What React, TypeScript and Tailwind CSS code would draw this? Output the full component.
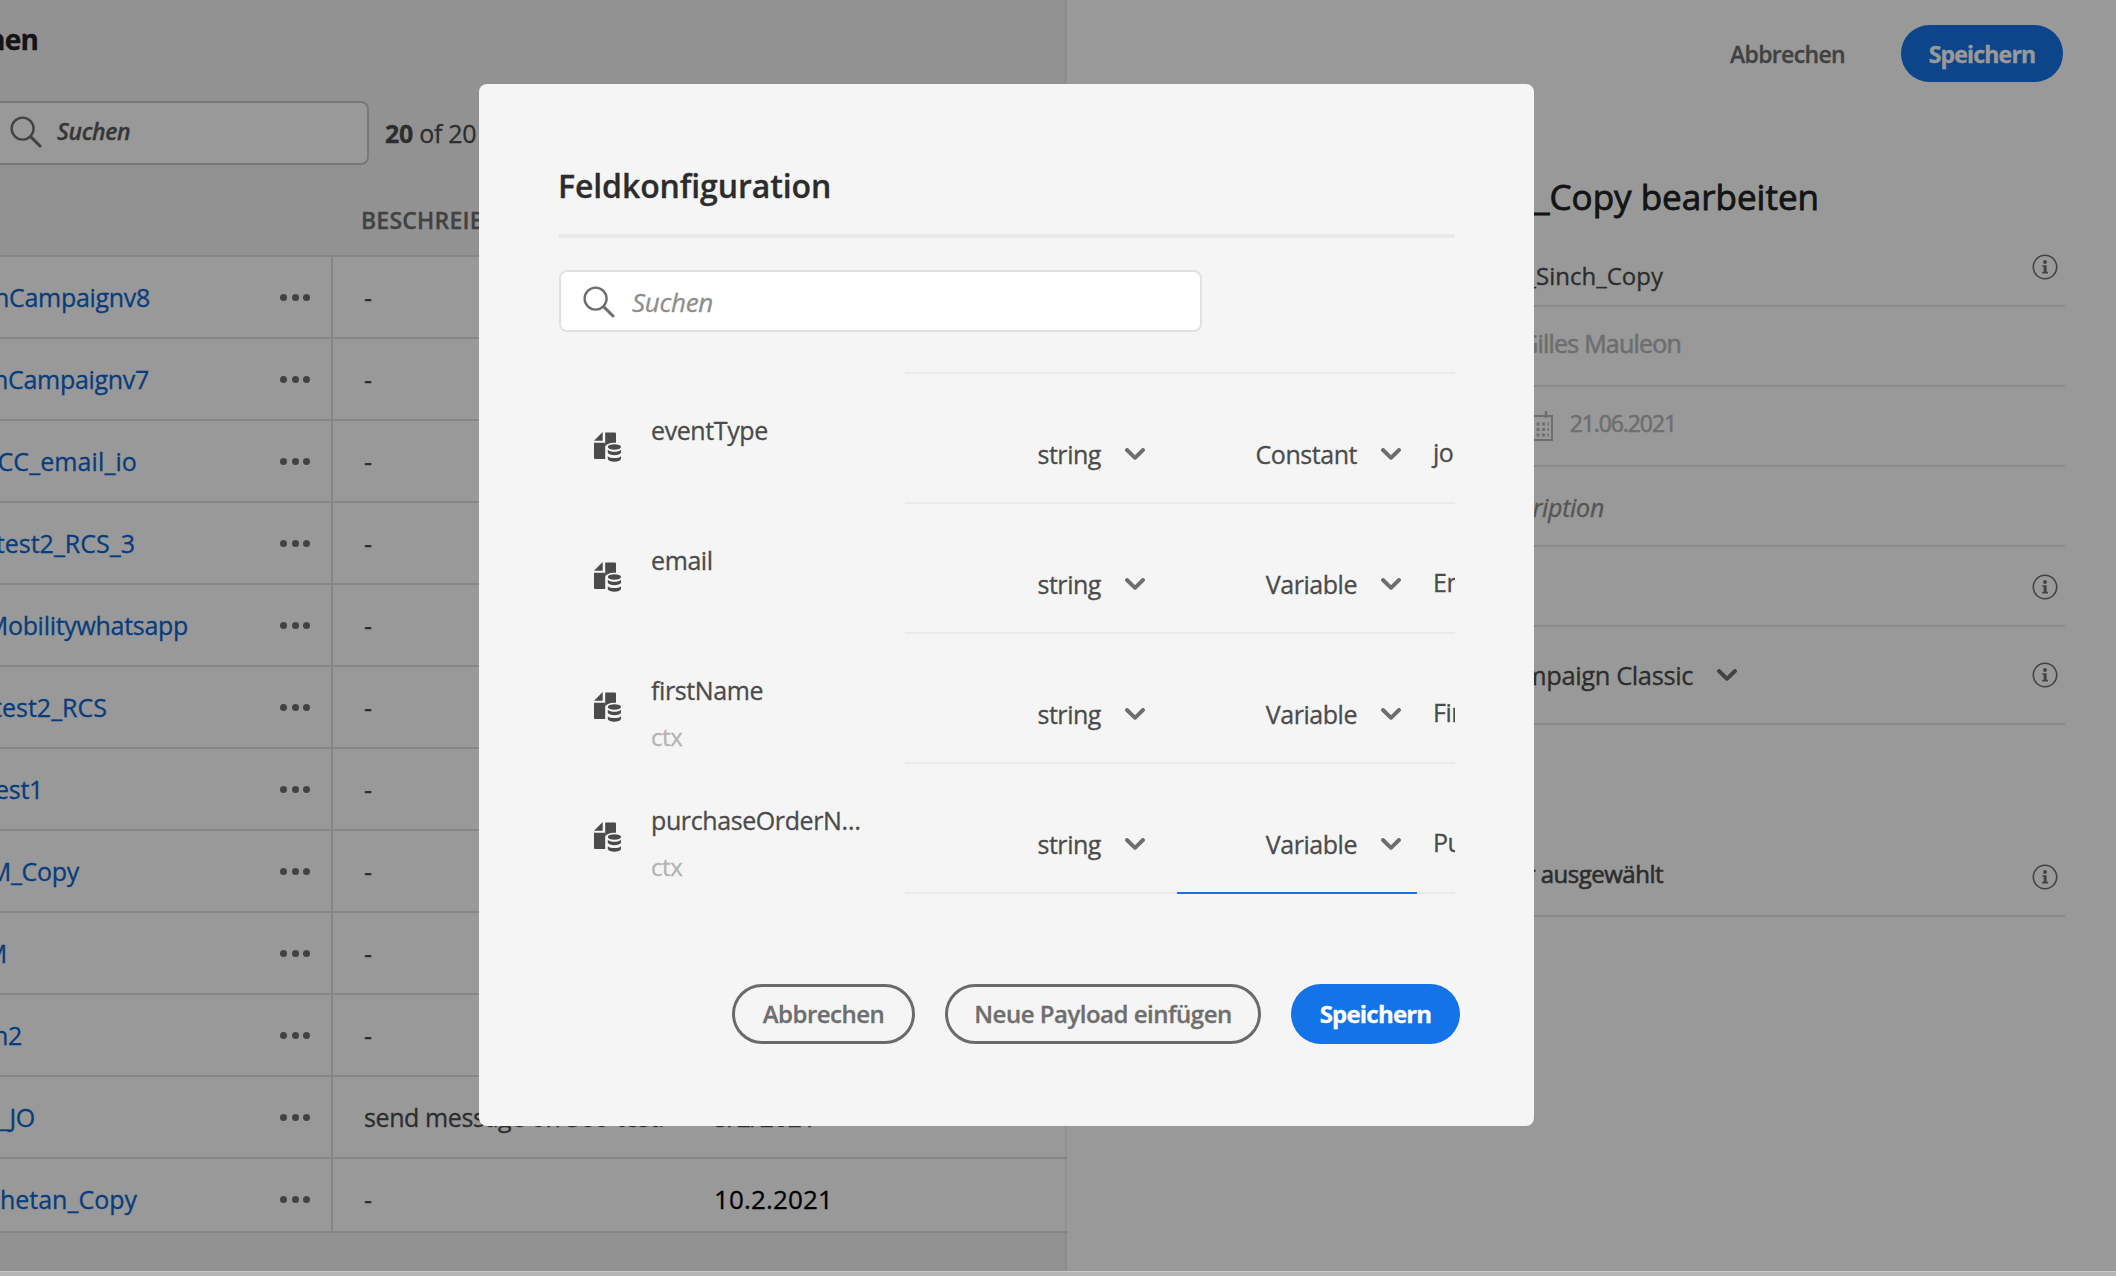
import type { ReactNode } from 'react';

type TableRow = { name: string; end: string; description: string; date?: string; dateClass?: string };

const rows: TableRow[] = [
  { name: 'SinchCampaignv8', end: 'w-[150px]', description: '-' },
  { name: 'SinchCampaignv7', end: 'w-[149px]', description: '-' },
  { name: 'ACC_email_io', end: 'w-[137px] tracking-[0.1px]', description: '-' },
  { name: 'test2_RCS_3', end: 'w-[135px] tracking-normal', description: '-' },
  { name: 'Mobilitywhatsapp', end: 'w-[188px]', description: '-' },
  { name: 'test2_RCS', end: 'w-[107px] tracking-normal', description: '-' },
  { name: 'test1', end: 'w-[43px]', description: '-' },
  { name: 'ACM_Copy', end: 'w-[79px]', description: '-' },
  { name: 'ACM', end: 'w-[7px]', description: '-' },
  { name: 'Sinch2', end: 'w-[22px]', description: '-' },
  { name: 'test_JO', end: 'w-[35px]', description: 'send message on 360-test.', date: '5/2/2021' },
  { name: 'Chetan_Copy', end: 'w-[137px] tracking-normal', description: '-', date: '10.2.2021', dateClass: 'text-black text-[26px] tracking-[0.15px]' },
];

const fields = [
  { name: 'eventType', source: '', mode: 'Constant', value: 'journey' },
  { name: 'email', source: '', mode: 'Variable', value: 'Email' },
  { name: 'firstName', source: 'ctx', mode: 'Variable', value: 'First name' },
  { name: 'purchaseOrderN…', source: 'ctx', mode: 'Variable', value: 'Purchase', active: true },
];

function SearchIcon({ className }: { className: string }) {
  return (
    <svg viewBox="0 0 32 32" className={className} fill="none" stroke="currentColor" strokeWidth="2.4" strokeLinecap="round">
      <circle cx="12.6" cy="12.6" r="11" />
      <path d="M20.6 20.6 30 30" strokeWidth="3" />
    </svg>
  );
}

function Chevron({ className }: { className: string }) {
  return (
    <svg viewBox="0 0 20 12" className={`h-3 w-5 shrink-0 ${className}`} fill="none" stroke="currentColor" strokeWidth="3.9" strokeLinecap="round" strokeLinejoin="round">
      <path d="M2 2 10 9.8 18 2" />
    </svg>
  );
}

function InfoIcon() {
  return (
    <svg viewBox="0 0 26 26" className="size-[26px] shrink-0 text-[#6e6e6e]" fill="none" stroke="currentColor">
      <circle cx="13" cy="13" r="11.7" strokeWidth="1.6" />
      <circle cx="13" cy="8" r="1.9" fill="currentColor" stroke="none" />
      <path d="M10.4 11.2h4.2v6.6h1.4v1.6h-5.8v-1.6h1.5v-5h-1.3z" fill="currentColor" stroke="none" />
    </svg>
  );
}

function FieldIcon() {
  return (
    <svg viewBox="0 0 27 30" className="mt-[58px] h-[30px] w-[27px] shrink-0 text-[#4b4b4b]" fill="currentColor">
      <path d="M8.7 0v8.7H0z" />
      <path d="M11.2.5H21a1 1 0 0 1 1 1v9.2c-4.8-.4-9.3 1-10.8 3.8z" />
      <path d="M0 10.8h11.2V27H1a1 1 0 0 1-1-1z" />
      <ellipse cx="20.4" cy="15" rx="6.6" ry="2.7" />
      <path d="M13.8 17.8c1.5 1.500 4 2 6.600 2s5.100-.5 6.600-2v2.900c-.6 1.600-3.400 2.500-6.600 2.500s-6-.9-6.600-2.500z" />
      <path d="M13.8 24.200c1.500 1.400 4 1.900 6.600 1.900s5.100-.5 6.600-1.900v2.800c-.6 1.700-3.400 2.700-6.600 2.700s-6-1-6.600-2.700z" />
    </svg>
  );
}

function CalendarIcon() {
  return (
    <svg viewBox="0 0 28 30" className="h-[30px] w-7 shrink-0" fill="none" stroke="currentColor">
      <path d="M1 5h26v24H1z" strokeWidth="2" />
      <path d="M7 0v7M21 0v7" strokeWidth="2.5" />
      <path d="M6 13h18M6 18.5h18M6 24h18" strokeWidth="3" strokeDasharray="3 2.5" />
    </svg>
  );
}

function PanelRow({ height, end, info, children }: { height: string; end: string; info?: string; children?: ReactNode }) {
  return (
    <div className={`flex justify-between border-b-2 border-[#e8e8e8] ${height}`}>
      <div className={`flex shrink-0 justify-end whitespace-nowrap ${end}`}>{children}</div>
      {info && <div className={`mr-[7px] ${info}`}><InfoIcon /></div>}
    </div>
  );
}

export default function App() {
  return (
    <div className="relative flex h-[1276px] w-[2116px] flex-col overflow-hidden bg-[#f4f4f4] font-['Open_Sans','Noto_Sans',sans-serif] text-[25px] leading-8 tracking-[-0.3px] text-[#4b4b4b] [-webkit-text-stroke-width:0.3px]">
      <div className="flex min-h-0 flex-1">
        <section className="flex w-[1067px] flex-col overflow-hidden">
          <div className="flex h-[101px] w-[38px] justify-end pt-[23px] text-[28px] font-bold tracking-[-0.8px] text-[#222]">Aktionen</div>
          <div className="flex h-16">
            <div className="flex w-[369px] rounded-r-lg border-2 border-l-0 border-[#c8c8c8] bg-white pt-[13px] pl-[10px]">
              <SearchIcon className="size-8 text-[#6e6e6e]" />
              <span className="ml-[15px] text-[23px] leading-[30px] font-semibold tracking-[-0.4px] text-[#5a5a5a] italic">Suchen</span>
            </div>
            <div className="ml-4 pt-4 whitespace-nowrap"><b>20</b> of 20</div>
          </div>
          <div className="h-[90px] pt-[39px] pl-[361px] text-[23px] font-semibold tracking-[0.2px] text-[#6e6e6e]">BESCHREIBUNG</div>
          <div className="flex h-[978px] flex-col overflow-hidden border-y-2 border-[#e0e0e0] bg-white">
            {rows.map((row) => (
              <div key={row.name} className="flex h-[82px] shrink-0 border-b-2 border-[#e0e0e0]">
                <div className="flex w-[333px] shrink-0 items-start justify-between border-r-2 border-[#e0e0e0] pt-6">
                  <div className={`flex shrink-0 justify-end whitespace-nowrap text-[#0d66d0] ${row.end}`}>{row.name}</div>
                  <div className="mt-[12.5px] mr-[21px] flex gap-[4.5px]">
                    <i className="size-[7px] rounded-full bg-[#6e6e6e]" />
                    <i className="size-[7px] rounded-full bg-[#6e6e6e]" />
                    <i className="size-[7px] rounded-full bg-[#6e6e6e]" />
                  </div>
                </div>
                <div className="w-[381px] shrink-0 pt-6 pl-[31px] tracking-[-0.4px] whitespace-nowrap">{row.description}</div>
                <div className={`pt-6 ${row.dateClass ?? ''}`}>{row.date}</div>
              </div>
            ))}
          </div>
        </section>

        <section className="flex flex-1 flex-col bg-white pr-[51px] shadow-[-2px_0_3px_rgba(0,0,0,0.06)]">
          <div className="flex justify-end pt-[25px] text-[23px] font-semibold">
            <div className="mr-[56px] pt-[13px] tracking-[-0.65px] text-[#6e6e6e]">Abbrechen</div>
            <div className="mr-[2px] flex h-[57px] w-[162px] justify-center rounded-full bg-[#1473e6] pt-[13px] font-bold tracking-[-0.8px] text-white">Speichern</div>
          </div>
          <div className="flex h-[173px] w-[752px] justify-end pt-[95px] text-[35px] leading-10 tracking-normal whitespace-nowrap text-[#222] [-webkit-text-stroke-width:0.8px]">ACC_Sinch_Copy bearbeiten</div>
          <PanelRow height="h-[52px]" end="w-[596px]" info="-mt-px"><span className="pt-[5px] text-[24px] tracking-normal">ACC_Sinch_Copy</span></PanelRow>
          <PanelRow height="h-20" end="w-[614px]"><span className="pt-[20px] tracking-[-0.8px] text-[#b8b8b8] [-webkit-text-stroke-width:0.6px]">Gilles Mauleon</span></PanelRow>
          <PanelRow height="h-20" end="w-[609px]">
            <span className="flex gap-[17px] pt-5 text-[23px] tracking-[-1.1px] text-[#b8b8b8] [-webkit-text-stroke-width:0.6px]"><span className="pt-[4px]"><CalendarIcon /></span>21.06.2021</span>
          </PanelRow>
          <PanelRow height="h-20" end="w-[537px]"><span className="pt-[24px] text-[#8e8e8e] italic">Description</span></PanelRow>
          <PanelRow height="h-20" end="w-[500px]" info="pt-[27px]" />
          <PanelRow height="h-[98px]" end="w-[670px]" info="pt-[35px]">
            <span className="flex gap-6 pt-8 text-[25.5px] tracking-[-0.4px]">Adobe Campaign Classic<Chevron className="mt-[10px] text-[#6e6e6e]" /></span>
          </PanelRow>
          <PanelRow height="h-[192px]" end="w-[596px]" info="pt-[139px]"><span className="pt-[133px] text-[24px] tracking-[-0.5px] [-webkit-text-stroke-width:0.6px]">Felder ausgewählt</span></PanelRow>
        </section>
      </div>
      <div className="relative z-20 h-[5px] shrink-0 border-t border-[#c8c8c8] bg-[#b4b4b4]" />

      <div className="absolute inset-0 z-10 bg-black/40 pt-[84px] pl-[479px]">
        <div className="flex h-[1042px] w-[1055px] flex-col rounded-lg bg-[#f5f5f5] pr-[79px] pl-[80px]">
          <h1 className="h-[154px] border-b-4 border-[#eaeaea] pt-[82px] text-[32px] leading-10 font-semibold tracking-[-0.1px] text-[#2c2c2c]"><span className="-ml-px">Feldkonfiguration</span></h1>
          <div className="mt-8 flex h-[62px] w-[643px] rounded-lg border-2 border-[#e1e1e1] bg-white pt-[14px] pl-[22px]">
            <SearchIcon className="size-8 text-[#6e6e6e]" />
            <span className="ml-[17px] text-[26px] text-[#8e8e8e] italic">Suchen</span>
          </div>
          <div className="mt-10 ml-[346px] h-[2px] shrink-0 bg-[#eaeaea]" />
          {fields.map((field) => (
            <div key={field.name} className="flex h-[130px] shrink-0 overflow-hidden">
              <div className="flex w-[346px] shrink-0 pl-[35px]">
                <FieldIcon />
                <div className="pt-10 pl-[30px] tracking-[-0.4px] whitespace-nowrap">
                  <div>{field.name}</div>
                  <div className="mt-[15px] text-[24px] text-[#b3b3b3]">{field.source}</div>
                </div>
              </div>
              <div className="flex min-w-0 flex-1 overflow-hidden border-b-2 border-[#eaeaea] tracking-[-0.45px]">
                <div className="flex w-[240px] shrink-0 justify-end gap-6 pt-[64px]">string<Chevron className="mt-[10px] text-[#6e6e6e]" /></div>
                <div className="ml-8 flex w-[240px] shrink-0 justify-end gap-6 pt-[64px] pr-4">{field.mode}<Chevron className="mt-[10px] text-[#6e6e6e]" /></div>
                <div className="pt-[62px] pl-4 whitespace-nowrap">{field.value}</div>
              </div>
              {field.active && <div className="mt-[128px] mr-[38px] -ml-[278px] h-[2px] w-[240px] shrink-0 bg-[#1473e6]" />}
            </div>
          ))}
          <div className="mt-[90px] flex justify-end gap-[30px] text-[24px] font-semibold tracking-[-0.5px] text-[#6e6e6e]">
            <div className="flex h-[60px] w-[183px] shrink-0 items-center justify-center rounded-full border-[3.5px] border-[#6a6a6a]">Abbrechen</div>
            <div className="flex h-[60px] w-[316px] shrink-0 items-center justify-center rounded-full border-[3.5px] border-[#6a6a6a]">Neue Payload einfügen</div>
            <div className="-mr-[5px] flex h-[60px] w-[169px] shrink-0 items-center justify-center rounded-full bg-[#1473e6] font-bold tracking-[-0.8px] text-white">Speichern</div>
          </div>
        </div>
      </div>
    </div>
  );
}
